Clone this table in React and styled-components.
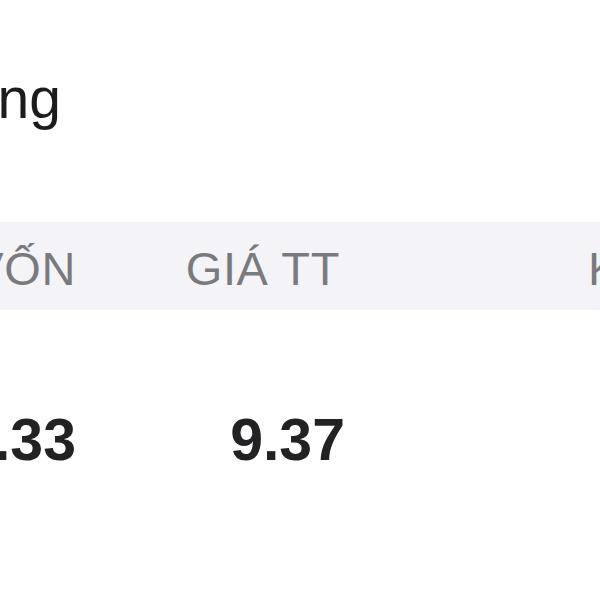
import React from "react";
import styled, { createGlobalStyle } from "styled-components";

const GlobalStyle = createGlobalStyle`
  html, body {
    margin: 0;
    padding: 0;
    background: #ffffff;
    overflow: hidden;
  }
  body {
    font-family: "Liberation Sans", Arial, Helvetica, sans-serif;
    -webkit-font-smoothing: antialiased;
  }
`;

const Screen = styled.div`
  width: 600px;
  height: 600px;
  overflow: hidden;
  background: #fff;
`;

const TitleBar = styled.div`
  display: flex;
  justify-content: flex-end;
  width: 61px;
  margin-top: 70px;
  white-space: nowrap;
`;

const Title = styled.h1`
  margin: 0;
  font-size: 57px;
  line-height: 57px;
  font-weight: 400;
  color: #1c1c1e;
`;

const Row = styled.div`
  display: grid;
  grid-template-columns: 76px 269px 1fr;
  white-space: nowrap;
`;

const HeaderRow = styled(Row)`
  margin-top: 95px;
  height: 88px;
  padding-top: 6px;
  box-sizing: border-box;
  background: #f4f4f8;
`;

const ValueRow = styled(Row)`
  padding-top: 60px;
`;

const Cell = styled.div`
  display: flex;
  justify-content: ${(p) => (p.$left ? "flex-start" : "flex-end")};
  padding-left: ${(p) => p.$padLeft || 0}px;
  padding-right: ${(p) => p.$padRight || 0}px;
`;

const HeadText = styled.span`
  font-size: 47px;
  line-height: 82px;
  color: #7a7a7e;
  letter-spacing: 0.6px;
`;

const Value = styled.span`
  font-size: 59px;
  line-height: 140px;
  font-weight: 700;
  color: #222224;
`;

export default function App() {
  return (
    <Screen>
      <GlobalStyle />
      <TitleBar>
        <Title>Cổ phiếu đang</Title>
      </TitleBar>
      <HeaderRow>
        <Cell>
          <HeadText>GIÁ VỐN</HeadText>
        </Cell>
        <Cell $padRight={5}>
          <HeadText>GIÁ TT</HeadText>
        </Cell>
        <Cell $left $padLeft={243}>
          <HeadText>KHỐI LƯỢNG</HeadText>
        </Cell>
      </HeaderRow>
      <ValueRow>
        <Cell>
          <Value>10.33</Value>
        </Cell>
        <Cell>
          <Value>9.37</Value>
        </Cell>
        <Cell $left $padLeft={243}>
          <Value></Value>
        </Cell>
      </ValueRow>
    </Screen>
  );
}
